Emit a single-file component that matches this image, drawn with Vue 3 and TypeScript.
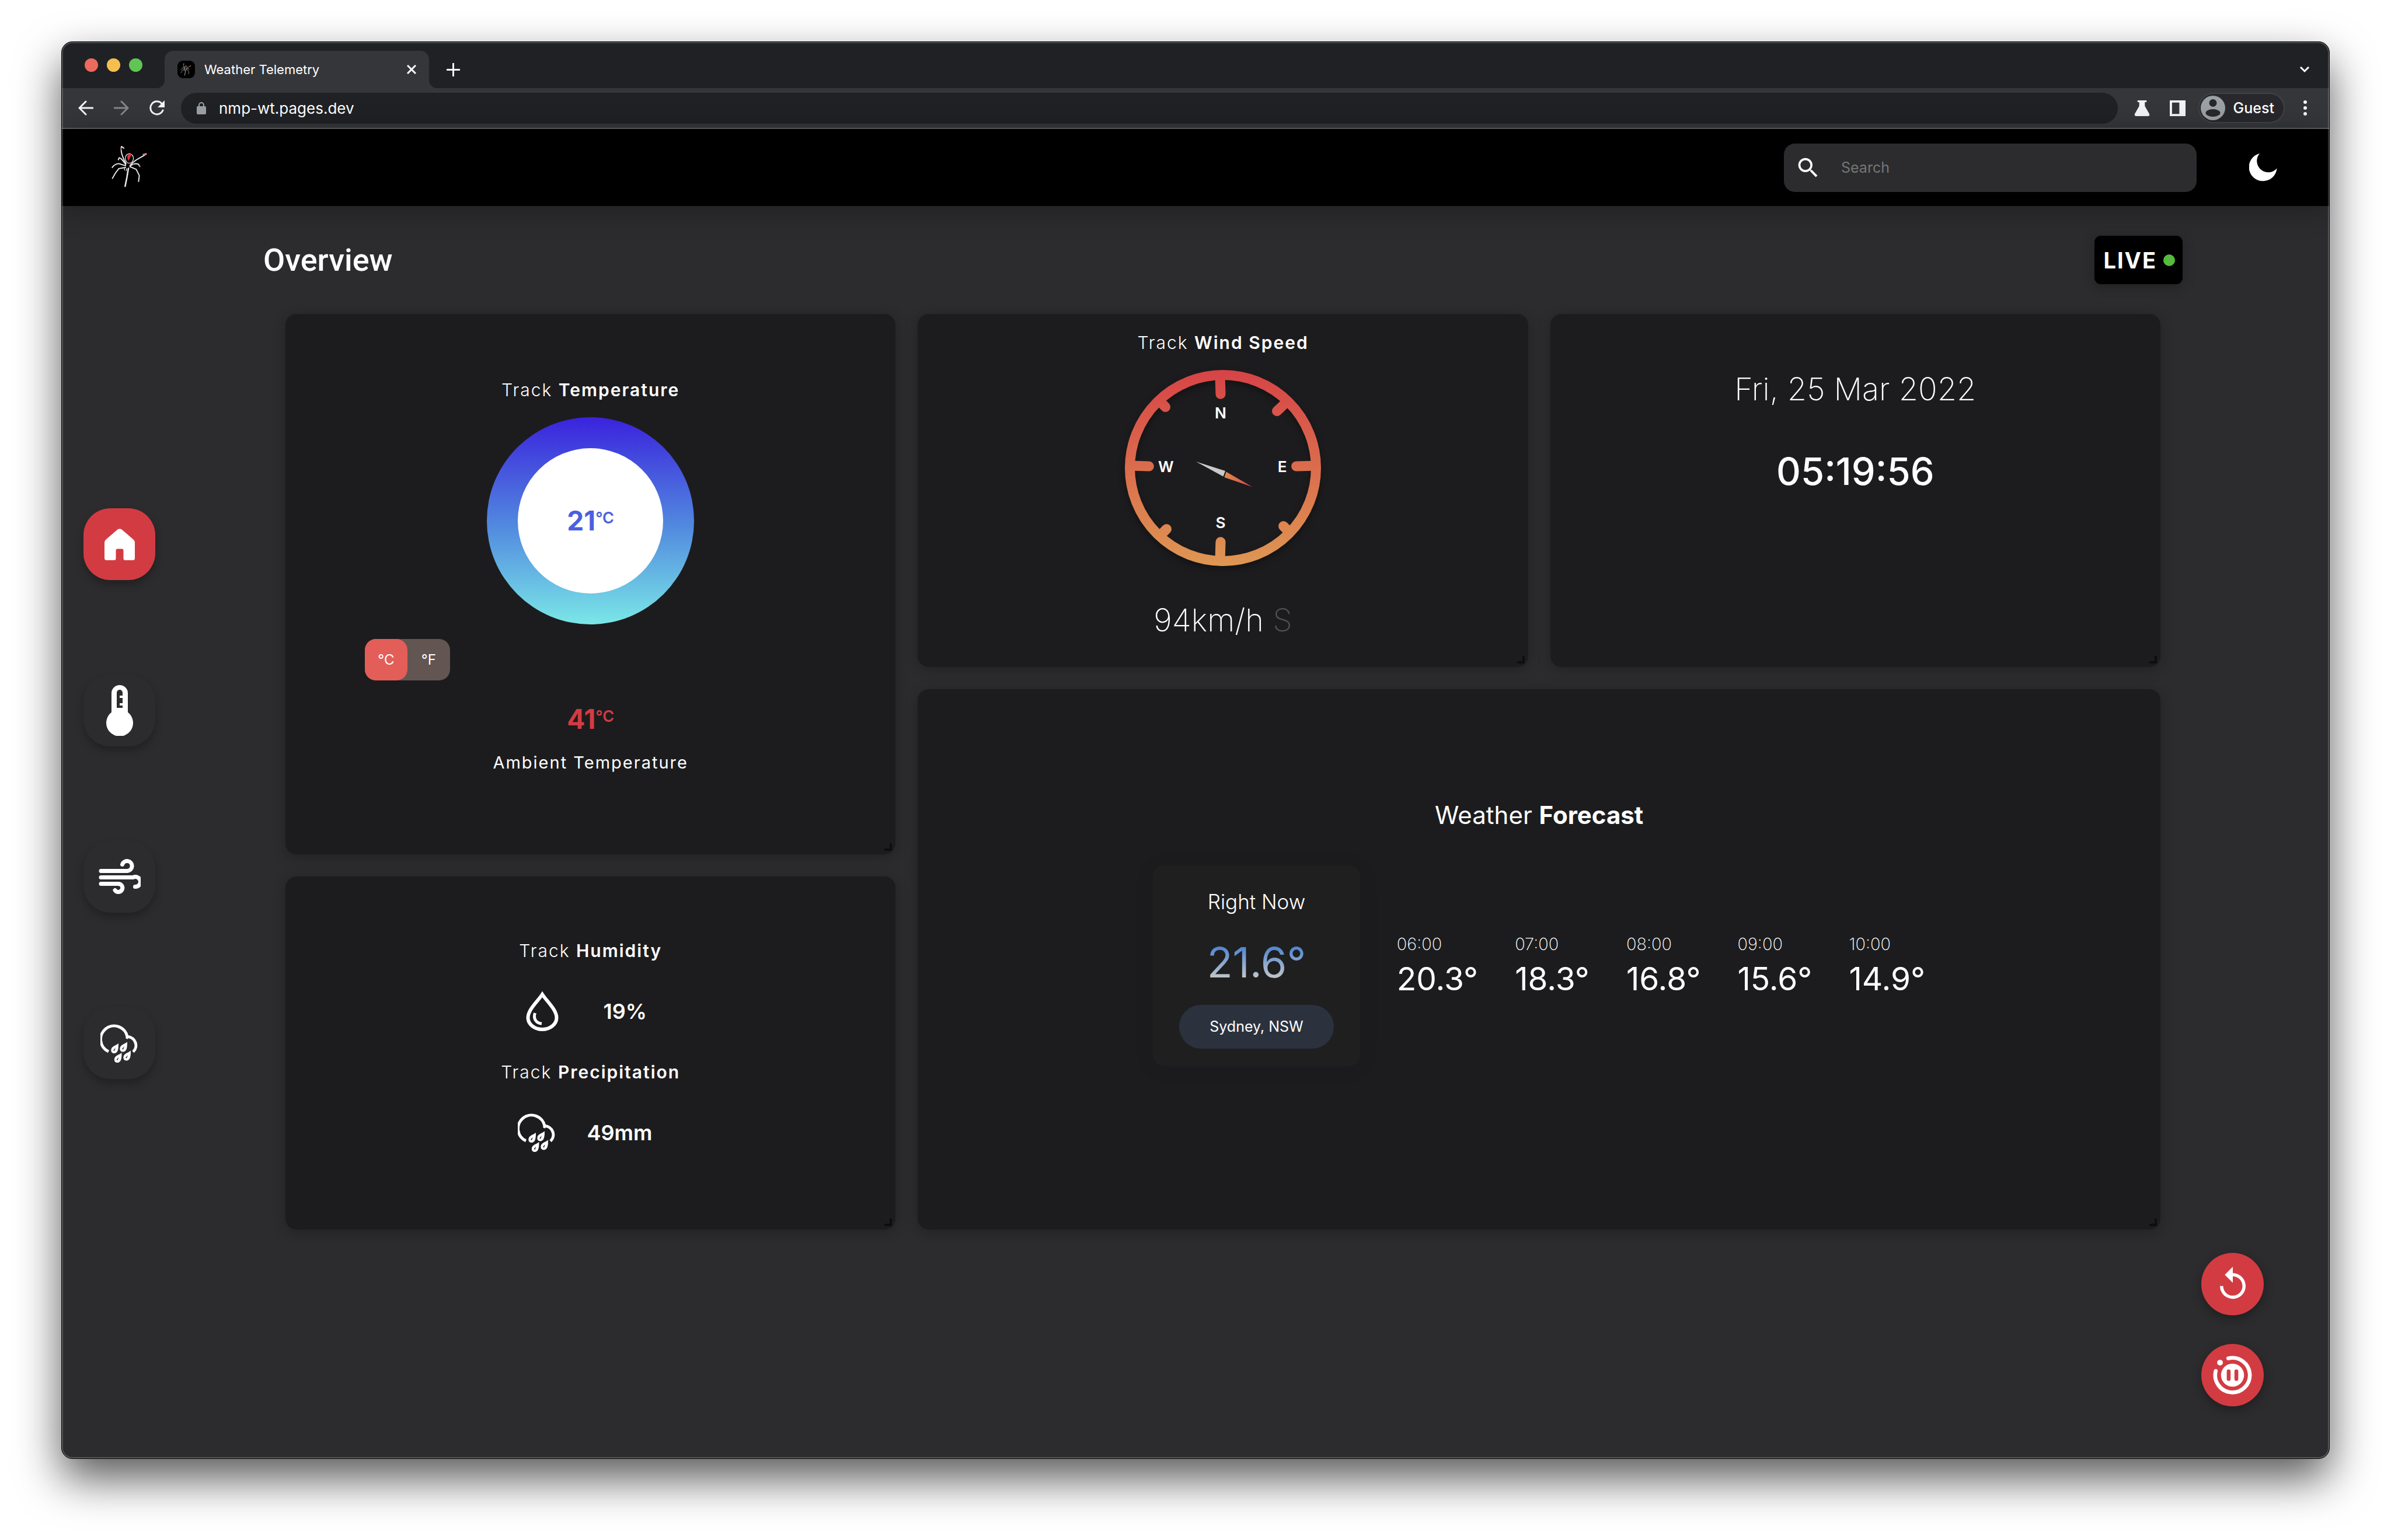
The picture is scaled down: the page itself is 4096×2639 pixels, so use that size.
<script setup lang="ts">
import { ref } from 'vue'

interface HourForecast {
  time: string
  temp: string
}

const address = ref('nmp-wt.pages.dev')
const query = ref('')
const unit = ref<'C' | 'F'>('C')

const hours: HourForecast[] = [
  { time: '06:00', temp: '20.3°' },
  { time: '07:00', temp: '18.3°' },
  { time: '08:00', temp: '16.8°' },
  { time: '09:00', temp: '15.6°' },
  { time: '10:00', temp: '14.9°' },
]
</script>

<template>
  <div class="desktop">
    <svg class="defs" aria-hidden="true">
      <symbol id="spider" viewBox="66 24 206 272">
        <g fill="none" stroke="#ececec" stroke-width="6" stroke-linecap="round" stroke-linejoin="round">
          <path d="M133 55 120 46C115 62 119 78 125 96C130 112 138 128 146 142" />
          <path d="M166 150C176 137 188 128 202 118L240 96 255 86 238 89" />
          <path d="M103 118 108 107 119 113C128 121 136 134 146 148" />
          <path d="M70 160C78 148 90 140 106 139L134 148 146 152" />
          <path d="M142 160 106 166C92 182 80 200 71 219" />
          <path d="M166 156 200 170 217 204 213 236" />
          <path d="M168 152C180 142 196 136 212 142L220 155" />
          <path d="M158 163 150 212 140 262" stroke-width="8" />
          <path d="M137 165 137 174M148 166 146 178" stroke-width="4" />
          <ellipse cx="163" cy="111" rx="22" ry="26" stroke-width="4" />
        </g>
        <ellipse cx="154" cy="150" rx="9" ry="13" fill="#000" />
        <path d="M153 96C158 86 168 84 177 88C170 98 166 110 158 124C153 114 151 104 153 96Z" fill="#df2f3a" />
        <path d="M117 52 119 66M238 89 252 88M182 144 188 140M219 148 221 156" stroke="#d9404a" stroke-width="4" fill="none" />
      </symbol>
      <symbol id="rain" viewBox="0 0 66 66">
        <path d="M14 47A23 23 0 1 1 46 21.500A15 15 0 0 1 56 47.500" fill="none" stroke="#fff" stroke-width="5" />
        <path d="M45 25 47 19" stroke="#fff" stroke-width="4" />
        <g fill="#fff" fill-rule="evenodd">
          <path id="drop" d="M31 33C31 40 31 50 23.500 50C18 50 17 44 20 40C23 37 27 36 31 33ZM26 40.500 22 45 24 46Z" />
          <use href="#drop" x="15" y="-2.500" />
          <use href="#drop" x="5.500" y="16" />
          <use href="#drop" x="21" y="12.500" />
        </g>
      </symbol>
    </svg>

    <div class="window">
      <div class="tabstrip">
        <div class="lights">
          <button class="light close" aria-label="Close window"></button>
          <button class="light minimise" aria-label="Minimise window"></button>
          <button class="light zoom" aria-label="Zoom window"></button>
        </div>
        <div class="tab">
          <span class="favicon"><svg viewBox="0 0 24 30"><use href="#spider" /></svg></span>
          <span class="tab-title">Weather Telemetry</span>
          <button class="plain tab-close" aria-label="Close tab">
            <svg viewBox="0 0 16 16"><path d="M1 1 15 15M15 1 1 15" stroke="#fff" stroke-width="3" /></svg>
          </button>
        </div>
        <button class="plain new-tab" aria-label="New tab">
          <svg viewBox="0 0 24 24"><path d="M12 1V23M1 12H23" stroke="#fff" stroke-width="3" stroke-linecap="round" /></svg>
        </button>
        <button class="plain tab-search" aria-label="Search tabs">
          <svg viewBox="0 0 18 12"><path d="M2 2 9 9 16 2" fill="none" stroke="#fff" stroke-width="3" /></svg>
        </button>
      </div>

      <div class="toolbar">
        <div class="nav-buttons">
          <button class="plain" aria-label="Back">
            <svg viewBox="0 0 26 26"><path d="M25 13H2M13 2 2 13 13 24" fill="none" stroke="#f1f3f4" stroke-width="3" stroke-linecap="round" /></svg>
          </button>
          <button class="plain" aria-label="Forward">
            <svg viewBox="0 0 26 26"><path d="M1 13H24M13 2 24 13 13 24" fill="none" stroke="#858689" stroke-width="3" stroke-linecap="round" /></svg>
          </button>
          <button class="plain" aria-label="Reload">
            <svg viewBox="0 0 26 26">
              <path d="M23 17A11 11 0 1 1 21 5.500" fill="none" stroke="#f1f3f4" stroke-width="3" stroke-linecap="round" />
              <path d="M26 0V12H14Z" fill="#f1f3f4" />
            </svg>
          </button>
        </div>
        <label class="omnibox">
          <svg viewBox="0 0 16 21">
            <rect y="7" width="16" height="14" rx="2" fill="#9aa0a6" />
            <path d="M4 8V5A4 4 0 0 1 12 5V8" fill="none" stroke="#9aa0a6" stroke-width="2" />
          </svg>
          <input v-model="address" type="text" aria-label="Address" />
        </label>
        <div class="tools">
          <button class="plain" aria-label="Experiments">
            <svg viewBox="0 0 28 28"><path d="M6 0H22V3H19V10L27 24Q28 28 24 28H4Q0 28 1 24L9 10V3H6Z" fill="#f1f3f4" /></svg>
          </button>
          <button class="plain" aria-label="Side panel">
            <svg viewBox="0 0 28 28"><path d="M0 0H28V28H0ZM4 4V24H17V4Z" fill="#f1f3f4" fill-rule="evenodd" /></svg>
          </button>
        </div>
        <button class="profile">
          <svg viewBox="0 0 42 42">
            <circle cx="21" cy="21" r="21" fill="#9aa0a6" />
            <circle cx="21" cy="12.500" r="6.500" fill="#28282c" />
            <ellipse cx="21" cy="29.500" rx="12.500" ry="6.500" fill="#28282c" />
          </svg>
          <span>Guest</span>
        </button>
        <button class="plain menu" aria-label="Menu">
          <svg viewBox="0 0 6 26"><circle cx="3" cy="3" r="3" /><circle cx="3" cy="13" r="3" /><circle cx="3" cy="23" r="3" /></svg>
        </button>
      </div>

      <header class="header">
        <a class="logo" href="#" aria-label="Weather Telemetry"><svg viewBox="0 0 65 86"><use href="#spider" /></svg></a>
        <label class="search">
          <svg viewBox="0 0 24 24"><path fill="#fff" d="M15.500 14h-.79l-.28-.27A6.470 6.470 0 0 0 16 9.500 6.500 6.500 0 1 0 9.500 16c1.610 0 3.090-.59 4.230-1.570l.27.28v.79l5 4.990L20.490 19l-4.990-5zm-6 0C7.010 14 5 11.990 5 9.500S7.010 5 9.500 5 14 7.010 14 9.500 11.990 14 9.500 14z" /></svg>
          <input v-model="query" type="text" placeholder="Search" aria-label="Search" />
        </label>
        <button class="plain moon" aria-label="Toggle theme">
          <svg viewBox="0 0 48 48"><path fill="#fff" d="M18 0A24 24 0 1 0 47.500 25.500A19 19 0 1 1 18 0Z" /></svg>
        </button>
      </header>

      <div class="body">
        <nav class="sidebar">
          <a class="side-link active" href="#" aria-label="Overview">
            <svg viewBox="0 0 52 54" width="52" height="54">
              <path fill="#fff" d="M22.500 1.200Q26 -.8 29.500 1.200L49.500 18.500Q52 20.500 52 24V50.500Q52 54 48.500 54H35.500Q32.500 54 32.500 51V37.500Q32.500 34.500 29.500 34.500H22.500Q19.500 34.500 19.500 37.500V51Q19.500 54 16.500 54H3.500Q0 54 0 50.500V24Q0 20.500 2.500 18.500Z" />
            </svg>
          </a>
          <a class="side-link" href="#" aria-label="Temperature">
            <svg viewBox="0 0 46 87" width="46" height="87">
              <path fill="#fff" fill-rule="evenodd" d="M9 14A14 14 0 0 1 37 14V46.500A23 23 0 1 1 9 46.500ZM18 39H28V35H23V31H28V22H23V18H28V13A5 5 0 0 0 18 13Z" />
            </svg>
          </a>
          <a class="side-link" href="#" aria-label="Wind">
            <svg viewBox="0 0 72 61" width="72" height="61" fill="none" stroke="#fff" stroke-width="7" stroke-linecap="round">
              <path d="M4 20.500H49A8.500 8.500 0 1 0 40.500 9.500" />
              <path d="M4 31.500H59A8.500 8.500 0 1 1 62.500 47.500" />
              <path d="M4 42.500H33.500A7 7 0 1 1 28 53.500" />
            </svg>
          </a>
          <a class="side-link" href="#" aria-label="Rain">
            <svg viewBox="0 0 66 66" width="66" height="66"><use href="#rain" /></svg>
          </a>
        </nav>

        <main class="main">
          <div class="title-row">
            <h1>Overview</h1>
            <div class="live">LIVE<span class="live-dot"></span></div>
          </div>

          <div class="grid">
            <section class="card temperature">
              <h2 class="track">Track <b>Temperature</b></h2>
              <div class="ring"><div class="ring-core">21<sup>°C</sup></div></div>
              <div class="toggle" role="radiogroup" aria-label="Unit">
                <label :class="{ on: unit === 'C' }"><input v-model="unit" type="radio" name="unit" value="C" />°C</label>
                <label :class="{ on: unit === 'F' }"><input v-model="unit" type="radio" name="unit" value="F" />°F</label>
              </div>
              <div class="ambient-value">41<sup>°C</sup></div>
              <div class="track ambient-label">Ambient Temperature</div>
              <i class="grip"></i>
            </section>

            <section class="card wind">
              <h2 class="track">Track <b>Wind Speed</b></h2>
              <svg class="compass" viewBox="0 0 334 334">
                <defs>
                  <linearGradient id="dial" gradientUnits="userSpaceOnUse" x1="0" y1="0" x2="0" y2="334">
                    <stop offset="0" stop-color="#d74347" />
                    <stop offset="1" stop-color="#de9753" />
                  </linearGradient>
                  <linearGradient id="needle" gradientUnits="userSpaceOnUse" x1="172" y1="178" x2="217" y2="199">
                    <stop offset="0" stop-color="#de8a50" />
                    <stop offset="1" stop-color="#d74347" />
                  </linearGradient>
                </defs>
                <circle class="dial" cx="167" cy="167" r="158.500" fill="none" stroke="url(#dial)" stroke-width="17" />
                <g stroke="url(#dial)" stroke-width="17" stroke-linecap="round" fill="none">
                  <path d="M162 9 163 41" />
                  <path d="M162 325 163 293" />
                  <path d="M9 163 41 164" />
                  <path d="M325 163 292 164" />
                  <path d="M60 54 69 63" />
                  <path d="M276 54 259 70" />
                  <path d="M61 281 71 271" />
                  <path d="M279 275 270 266" />
                </g>
                <g class="points">
                  <text x="163" y="83">N</text>
                  <text x="163" y="269">S</text>
                  <text x="70" y="174">W</text>
                  <text x="268" y="174">E</text>
                </g>
                <path d="M121 156 171 172 167.500 181.500Z" fill="#c9c9c9" />
                <path d="M217 199 172.500 173.500 169.500 183Z" fill="url(#needle)" />
              </svg>
              <div class="thin speed">94km/h <span>S</span></div>
              <i class="grip"></i>
            </section>

            <section class="card clock">
              <div class="thin">Fri, 25 Mar 2022</div>
              <div class="time">05:19:56</div>
              <i class="grip"></i>
            </section>

            <section class="card humidity">
              <h2 class="track">Track <b>Humidity</b></h2>
              <div class="reading">
                <svg viewBox="0 0 70 70">
                  <path d="M35 6C28 17 10.500 32 10.500 46A24.500 20 0 0 0 59.500 46C59.500 32 42 17 35 6Z" fill="none" stroke="#fff" stroke-width="6" />
                  <path d="M22.500 38C19 48 25 55.500 34 56" fill="none" stroke="#fff" stroke-width="5" />
                </svg>
                <span>19%</span>
              </div>
              <h2 class="track">Track <b>Precipitation</b></h2>
              <div class="reading">
                <svg viewBox="-2 -2 70 70"><use href="#rain" width="66" height="66" /></svg>
                <span>49mm</span>
              </div>
              <i class="grip"></i>
            </section>

            <section class="card forecast">
              <h2 class="forecast-title">Weather <b>Forecast</b></h2>
              <div class="forecast-row">
                <div class="now">
                  <div class="now-label">Right Now</div>
                  <div class="now-temp">21.6°</div>
                  <div class="place">Sydney, NSW</div>
                </div>
                <div v-for="hour in hours" :key="hour.time" class="hour">
                  <div class="hour-time">{{ hour.time }}</div>
                  <div class="hour-temp">{{ hour.temp }}</div>
                </div>
              </div>
              <i class="grip"></i>
            </section>
          </div>
        </main>

        <div class="actions">
          <button class="fab" aria-label="Replay">
            <svg viewBox="0 0 24 24" width="66" height="66"><path fill="#fff" d="M12 5V1L7 6l5 5V7c3.310 0 6 2.690 6 6s-2.690 6-6 6-6-2.690-6-6H4c0 4.420 3.580 8 8 8s8-3.580 8-8-3.580-8-8-8z" /></svg>
          </button>
          <button class="fab" aria-label="Pause">
            <svg viewBox="0 0 24 24" width="79" height="79">
              <path d="M9.800 3.270A9 9 0 1 1 3.270 9.800" fill="none" stroke="#fff" stroke-width="2" stroke-linecap="round" />
              <circle cx="5.500" cy="5.500" r="1.500" fill="#fff" />
              <circle cx="12" cy="12" r="6" fill="#fff" />
              <rect x="9" y="9" width="2" height="6" rx="1" fill="#d33b42" />
              <rect x="13" y="9" width="2" height="6" rx="1" fill="#d33b42" />
            </svg>
          </button>
        </div>
      </div>
    </div>
  </div>
</template>

<style>
body {
  margin: 0;
  background: #fff;
}
</style>

<style scoped>
* {
  box-sizing: border-box;
}

.desktop {
  display: flex;
  min-height: 100vh;
  padding: 71px 105px 139px;
  font-family: Inter, 'Liberation Sans', sans-serif;
  color: #fff;
}

.defs {
  position: absolute;
  width: 0;
  height: 0;
}

svg {
  display: block;
  flex: none;
}

button,
input {
  font: inherit;
  color: inherit;
}

.plain {
  display: flex;
  padding: 0;
  border: 0;
  background: none;
}

.window {
  position: relative;
  display: flex;
  flex: 1;
  flex-direction: column;
  min-width: 0;
  overflow: hidden;
  border: 1px solid #000;
  border-radius: 19px;
  background: #2c2c2e;
  box-shadow: 0 34px 76px rgba(0, 0, 0, 0.65);
}

/* light inner rim of the window frame, over all of its content */
.window::after {
  content: '';
  position: absolute;
  inset: 0;
  border: 2px solid rgba(255, 255, 255, 0.2);
  border-radius: 18px;
  pointer-events: none;
}

/* browser tabs */
.tabstrip {
  display: flex;
  align-items: flex-end;
  height: 79px;
  padding: 0 33px 0 39px;
  background: #202124;
}

.lights {
  display: flex;
  align-self: center;
  gap: 15px;
}

.light {
  width: 23px;
  height: 23px;
  padding: 0;
  border: 0;
  border-radius: 50%;
}

.close {
  background: #ed6a5e;
}

.minimise {
  background: #f5bf4f;
}

.zoom {
  background: #61c554;
}

.tab {
  position: relative;
  display: flex;
  align-items: center;
  width: 453px;
  height: 64px;
  margin-left: 38px;
  padding: 0 22px;
  border-radius: 15px 15px 0 0;
  background: #35363a;
}

.tab::before,
.tab::after {
  content: '';
  position: absolute;
  bottom: 0;
  width: 15px;
  height: 15px;
}

.tab::before {
  right: 100%;
  background: radial-gradient(circle at 0 0, transparent 15px, #35363a 16px);
}

.tab::after {
  left: 100%;
  background: radial-gradient(circle at 100% 0, transparent 15px, #35363a 16px);
}

.favicon {
  display: flex;
  align-items: center;
  justify-content: center;
  width: 30px;
  height: 30px;
  margin-right: 16px;
  border-radius: 9px;
  background: #000;
}

.favicon svg {
  width: 20px;
  height: 25px;
}

.tab-title {
  flex: 1;
  font-size: 22px;
  line-height: 30px;
}

.tab-close svg {
  width: 16px;
  height: 16px;
}

.new-tab {
  height: 64px;
  align-items: center;
  margin-left: 30px;
}

.new-tab svg {
  width: 23px;
  height: 23px;
}

.tab-search {
  height: 64px;
  align-items: center;
  margin-left: auto;
}

.tab-search svg {
  width: 18px;
  height: 12px;
}

/* browser toolbar */
.toolbar {
  display: flex;
  align-items: center;
  height: 70px;
  padding: 0 38px 0 28px;
  border-bottom: 2px solid #5f6064;
  background: #35363a;
}

.nav-buttons {
  display: flex;
  gap: 35px;
}

.nav-buttons svg {
  width: 26px;
  height: 26px;
}

.omnibox {
  display: flex;
  flex: 1;
  align-items: center;
  height: 53px;
  margin-left: 28px;
  padding: 0 27px;
  border-radius: 27px;
  background: #202124;
}

.omnibox svg {
  width: 16px;
  height: 21px;
  margin-right: 22px;
}

.omnibox input {
  flex: 1;
  padding: 0;
  border: 0;
  outline: 0;
  background: none;
  font-size: 26px;
}

.tools {
  display: flex;
  gap: 34px;
  margin: 0 22px 0 28px;
}

.tools svg {
  width: 27px;
  height: 27px;
}

.profile {
  display: flex;
  align-items: center;
  gap: 14px;
  height: 52px;
  padding: 0 16px 0 2px;
  border: 2px solid #414246;
  border-radius: 26px;
  background: #28282c;
  font-size: 25px;
  font-weight: 500;
}

.profile svg {
  width: 42px;
  height: 42px;
}

.menu {
  margin-left: 32px;
}

.menu svg {
  width: 6px;
  height: 26px;
  fill: #f1f3f4;
}

/* app header */
.header {
  position: relative;
  display: flex;
  align-items: center;
  height: 132px;
  padding: 0 89px 0 85px;
  background: #000;
  box-shadow: 0 6px 48px rgba(0, 0, 0, 0.3);
}

.logo svg {
  width: 65px;
  height: 86px;
}

.search {
  display: flex;
  align-items: center;
  width: 707px;
  height: 83px;
  margin-left: auto;
  padding: 0 19px;
  border-radius: 19px;
  background: #2c2c2e;
}

.search svg {
  width: 45px;
  height: 45px;
}

.search input {
  flex: 1;
  margin-left: 34px;
  padding: 0;
  border: 0;
  outline: 0;
  background: none;
  font-size: 25px;
}

.search input::placeholder {
  color: #757575;
}

.moon {
  margin-left: 90px;
}

.moon svg {
  width: 48px;
  height: 48px;
}

/* page body */
.body {
  display: flex;
  flex: 1;
}

.sidebar {
  display: flex;
  flex: none;
  flex-direction: column;
  gap: 162px;
  width: 345px;
  padding: 518px 0 0 37px;
}

.side-link {
  display: flex;
  align-items: center;
  justify-content: center;
  width: 123px;
  height: 123px;
  border-radius: 46px;
  background: #2c2c2e;
  box-shadow: 0 8px 14px rgba(0, 0, 0, 0.25);
}

.side-link.active {
  background: #d33b42;
}

.main {
  flex: 1;
  min-width: 0;
  padding: 51px 0;
}

.title-row {
  display: flex;
  align-items: center;
  justify-content: space-between;
}

h1,
h2 {
  margin: 0;
  font-weight: 400;
}

h1 {
  font: 500 54px/60px Roboto, 'Liberation Sans', sans-serif;
}

.live {
  display: flex;
  align-items: center;
  gap: 11px;
  height: 83px;
  padding: 0 13px 0 15px;
  border-radius: 11px;
  background: #000;
  box-shadow: 0 4px 20px rgba(0, 0, 0, 0.25);
  font-size: 38px;
  font-weight: 700;
  letter-spacing: 2px;
}

.live-dot {
  width: 20px;
  height: 20px;
  border-radius: 50%;
  background: #56bb3c;
}

.grid {
  display: grid;
  grid-template-columns: repeat(3, 1fr);
  grid-template-rows: repeat(5, 1fr);
  gap: 38px;
  min-height: 1569px;
  margin: 51px 38px 0;
}

.card {
  position: relative;
  display: flex;
  flex-direction: column;
  align-items: center;
  border-radius: 19px;
  background: #1c1c1e;
  box-shadow: 0 4px 22px rgba(0, 0, 0, 0.25);
}

.grip {
  position: absolute;
  right: 6px;
  bottom: 6px;
  width: 13px;
  height: 13px;
  border: solid #0e0e0e;
  border-width: 0 4px 4px 0;
}

.track {
  font-size: 30px;
  font-weight: 300;
  line-height: 36px;
  letter-spacing: 2px;
}

.track b {
  font-weight: 600;
}

.thin {
  font-size: 54px;
  font-weight: 200;
  line-height: 70px;
}

/* temperature */
.temperature {
  grid-row: 1 / span 3;
  padding-top: 112px;
}

.ring {
  display: flex;
  align-items: center;
  justify-content: center;
  width: 355px;
  height: 355px;
  margin-top: 29px;
  border-radius: 50%;
  background: linear-gradient(#3a23dd, #528adf 53%, #7ae7e7);
}

.ring-core {
  width: 249px;
  height: 249px;
  border-radius: 50%;
  background: #fff;
  color: #4a60e0;
  font-size: 46px;
  font-weight: 700;
  line-height: 249px;
  text-align: center;
}

sup {
  font-size: 27px;
  font-weight: 600;
  line-height: 0;
  vertical-align: 12px;
}

.toggle {
  display: flex;
  align-self: flex-start;
  margin: 25px 0 0 13%;
  border-radius: 19px;
  background: #635552;
}

.toggle label {
  width: 73px;
  border-radius: 19px;
  font-size: 24px;
  line-height: 71px;
  text-align: center;
}

.toggle .on {
  background: #e35e58;
}

.toggle input {
  position: absolute;
  opacity: 0;
}

.ambient-value {
  margin-top: 39px;
  color: #d33b42;
  font-size: 46px;
  font-weight: 700;
  line-height: 54px;
}

.ambient-label {
  margin-top: 30px;
  font-size: 29px;
  font-weight: 400;
}

/* wind */
.wind {
  grid-row: 1 / span 2;
  padding-top: 31px;
}

.compass {
  width: 336px;
  height: 336px;
  margin-top: 29px;
  overflow: visible;
}

.dial {
  filter: drop-shadow(0 5px 6px rgba(0, 0, 0, 0.35));
}

.points text {
  fill: #fff;
  font-size: 26px;
  font-weight: 600;
  text-anchor: middle;
}

.speed {
  margin-top: 58px;
}

.speed span {
  color: #505052;
}

/* date and time */
.clock {
  grid-row: 1 / span 2;
  padding-top: 94px;
}

.time {
  margin-top: 68px;
  font-size: 65px;
  font-weight: 500;
  line-height: 76px;
}

/* humidity */
.humidity {
  grid-row: 4 / span 2;
  grid-column: 1;
  gap: 51px;
  padding-top: 109px;
}

.reading {
  display: flex;
  align-items: center;
  justify-content: space-around;
  width: 283px;
  margin-right: 21px;
  font-size: 36px;
  font-weight: 600;
}

.reading svg {
  width: 70px;
  height: 70px;
}

/* forecast */
.forecast {
  grid-row: 3 / span 3;
  grid-column: 2 / span 2;
  padding-top: 190px;
}

.forecast-title {
  font-size: 42px;
  line-height: 52px;
}

.forecast-title b {
  font-weight: 700;
}

.forecast-row {
  display: flex;
  align-items: center;
  gap: 63px;
  margin-top: 60px;
}

.now {
  display: flex;
  flex-direction: column;
  align-items: center;
  padding: 40px 45px 30px;
  border-radius: 19px;
  background: #1f1f20;
  box-shadow: 0 4px 40px rgba(0, 0, 0, 0.06);
}

.now-label {
  font-size: 35px;
  font-weight: 300;
  line-height: 44px;
}

.now-temp {
  margin-top: 40px;
  background: linear-gradient(#3f7dd2 10%, #d0cdc9 90%);
  background-clip: text;
  color: transparent;
  font-size: 72px;
  font-weight: 400;
  line-height: 84px;
}

.place {
  margin-top: 31px;
  padding: 0 52px;
  border-radius: 38px;
  background: #2b323e;
  font-size: 25px;
  line-height: 75px;
}

.hour {
  padding-top: 2px;
}

.hour-time {
  font-size: 29px;
  font-weight: 200;
  line-height: 36px;
}

.hour-temp {
  margin-top: 6px;
  font-size: 55px;
  font-weight: 400;
  line-height: 70px;
}

/* floating actions */
.actions {
  display: flex;
  flex: none;
  flex-direction: column;
  justify-content: flex-end;
  align-items: flex-end;
  gap: 49px;
  width: 251px;
  padding: 0 112px 89px 0;
}

.fab {
  display: flex;
  align-items: center;
  justify-content: center;
  width: 107px;
  height: 107px;
  padding: 0;
  border: 0;
  border-radius: 50%;
  background: #d33b42;
  box-shadow: 0 6px 18px rgba(0, 0, 0, 0.3);
}
</style>
